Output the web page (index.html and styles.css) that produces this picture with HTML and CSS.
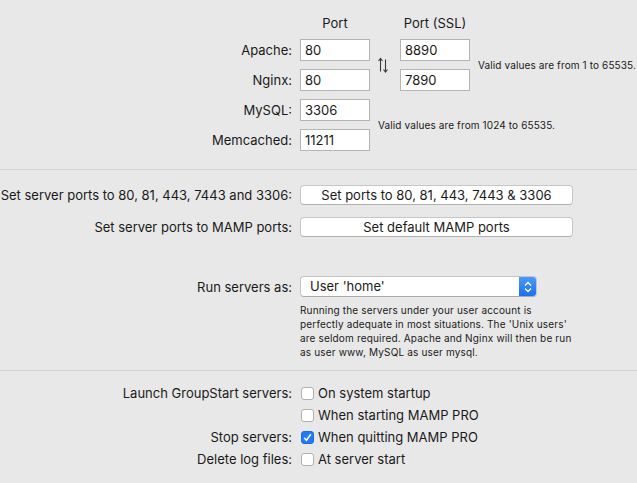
FILE: index.html
```html
<!DOCTYPE html>
<html>
<head>
<meta charset="utf-8">
<link rel="stylesheet" href="styles.css">
</head>
<body>
<div class="panel">
  <div class="ports">
    <div class="colhead c2">Port</div>
    <div class="colhead c4">Port (SSL)</div>

    <div class="lbl r2">Apache:</div>
    <div class="field c2 r2">80</div>
    <div class="swap">
      <svg width="10" height="16" viewBox="0 0 10 16" fill="none" stroke="#3a3a3a" stroke-width="1.1">
        <path d="M2.5 14.5V1.5M0.5 4L2.5 1.5L4.5 4"/>
        <path d="M7.5 2.5V15M5.5 12.5L7.5 15L9.5 12.5"/>
      </svg>
    </div>
    <div class="field c4 r2">8890</div>
    <div class="note note1">Valid values are from 1 to 65535.</div>

    <div class="lbl r3">Nginx:</div>
    <div class="field c2 r3">80</div>
    <div class="field c4 r3">7890</div>

    <div class="lbl r4">MySQL:</div>
    <div class="field c2 r4">3306</div>
    <div class="note note2">Valid values are from 1024 to 65535.</div>

    <div class="lbl r5">Memcached:</div>
    <div class="field c2 r5">11211</div>
  </div>

  <div class="sep"></div>

  <div class="form buttons">
    <div class="flabel">Set server ports to 80, 81, 443, 7443 and 3306:</div>
    <div class="btn">Set ports to 80, 81, 443, 7443 &amp; 3306</div>
    <div class="flabel">Set server ports to MAMP ports:</div>
    <div class="btn">Set default MAMP ports</div>
  </div>

  <div class="form runas">
    <div class="flabel">Run servers as:</div>
    <div class="select">
      <span class="select-text">User 'home'</span>
      <span class="stepper">
        <svg width="8" height="12" viewBox="0 0 8 12" fill="none" stroke="#fff" stroke-width="1.3">
          <path d="M1 4.5L4 1.5L7 4.5"/>
          <path d="M1 7.5L4 10.5L7 7.5"/>
        </svg>
      </span>
    </div>
    <div></div>
    <div class="desc">Running the servers under your user account is<br>perfectly adequate in most situations. The 'Unix users'<br>are seldom required. Apache and Nginx will then be run<br>as user www, MySQL as user mysql.</div>
  </div>

  <div class="sep"></div>

  <div class="form checks">
    <div class="flabel">Launch GroupStart servers:</div>
    <label class="check"><span class="box"></span>On system startup</label>
    <div></div>
    <label class="check"><span class="box"></span>When starting MAMP PRO</label>
    <div class="flabel">Stop servers:</div>
    <label class="check"><span class="box on"><svg width="9" height="9" viewBox="0 0 9 9" fill="none" stroke="#fff" stroke-width="1.5"><path d="M1.2 4.8L3.5 7.3L7.8 1.3"/></svg></span>When quitting MAMP PRO</label>
    <div class="flabel">Delete log files:</div>
    <label class="check"><span class="box"></span>At server start</label>
  </div>
</div>
</body>
</html>
```

FILE: styles.css
```css
html, body {
  margin: 0;
  padding: 0;
  background: #e8e8e8;
}
body {
  font-family: Inter, "Liberation Sans", Arial, sans-serif;
  font-size: 13px;
  color: #1a1a1a;
  width: 637px;
  height: 483px;
  overflow: hidden;
}
.panel {
  display: flex;
  flex-direction: column;
}
.ports {
  display: grid;
  grid-template-columns: 300px 70px 30px 70px 1fr;
  grid-template-rows: 23px 22px 22px 22px 22px;
  row-gap: 8px;
  padding-top: 8px;
  padding-bottom: 18px;
}
.colhead {
  grid-row: 1;
  align-self: end;
  text-align: center;
  line-height: 16px;
}
.c2 { grid-column: 2; }
.c4 { grid-column: 4; }
.r2 { grid-row: 2; }
.r3 { grid-row: 3; }
.r4 { grid-row: 4; }
.r5 { grid-row: 5; }
.lbl {
  grid-column: 1;
  text-align: right;
  padding-right: 8px;
  line-height: 22px;
}
.field {
  background: #fff;
  border: 1px solid #b4b4b4;
  box-sizing: border-box;
  height: 22px;
  line-height: 20px;
  padding-left: 4px;
}
.swap {
  grid-column: 3;
  grid-row: 2 / 4;
  align-self: center;
  padding-left: 8px;
  height: 16px;
}
.swap svg { display: block; }
.note {
  font-size: 10px;
  letter-spacing: 0.12px;
  align-self: center;
  white-space: nowrap;
}
.note1 {
  grid-column: 5;
  grid-row: 2 / 4;
  padding-left: 8px;
}
.note2 {
  grid-column: 3 / 6;
  grid-row: 4 / 6;
  padding-left: 8px;
}
.sep {
  height: 1px;
  background: #d3d3d3;
}
.form {
  display: grid;
  grid-template-columns: 292px 1fr;
  column-gap: 8px;
}
.flabel {
  text-align: right;
  white-space: nowrap;
  align-self: center;
}
.buttons {
  padding-top: 15px;
  row-gap: 12px;
  grid-template-rows: 20px 20px;
}
.btn {
  width: 273px;
  height: 20px;
  box-sizing: border-box;
  background: #fff;
  border: 1px solid #c6c6c6;
  border-bottom-color: #b0b0b0;
  border-radius: 4px;
  text-align: center;
  line-height: 18px;
}
.runas {
  margin-top: 39px;
  padding-bottom: 11px;
}
.select {
  width: 237px;
  height: 21px;
  box-sizing: border-box;
  background: #fff;
  border: 1px solid #c4c4c4;
  border-bottom-color: #ababab;
  border-radius: 4px;
  display: flex;
  align-items: stretch;
  overflow: hidden;
}
.select-text {
  flex: 1;
  padding-left: 9px;
  line-height: 19px;
}
.stepper {
  width: 17px;
  background: linear-gradient(#4a9af8, #1c6ff0);
  display: flex;
  align-items: center;
  justify-content: center;
}
.stepper svg { display: block; }
.desc {
  margin-top: 6px;
  font-size: 10px;
  letter-spacing: 0.17px;
  line-height: 14px;
  white-space: nowrap;
}
.checks {
  padding-top: 11px;
  grid-auto-rows: 22px;
}
.check {
  display: flex;
  align-items: center;
  gap: 4px;
  white-space: nowrap;
}
.box {
  width: 13px;
  height: 13px;
  box-sizing: border-box;
  background: #fff;
  border: 1px solid #b0b0b0;
  border-radius: 3px;
  display: flex;
  align-items: center;
  justify-content: center;
  margin-left: 1px;
}
.box.on {
  background: #1f7cf5;
  border-color: #1a6fe6;
}
.box svg { display: block; }
```
